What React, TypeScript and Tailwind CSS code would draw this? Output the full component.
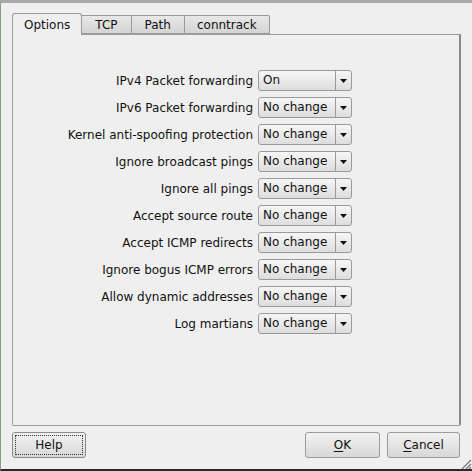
import React from 'react';

const rows = [
  ['IPv4 Packet forwarding', 'On'],
  ['IPv6 Packet forwarding', 'No change'],
  ['Kernel anti-spoofing protection', 'No change'],
  ['Ignore broadcast pings', 'No change'],
  ['Ignore all pings', 'No change'],
  ['Accept source route', 'No change'],
  ['Accept ICMP redirects', 'No change'],
  ['Ignore bogus ICMP errors', 'No change'],
  ['Allow dynamic addresses', 'No change'],
  ['Log martians', 'No change'],
];

const Combo = ({ value }: { value: string }) => (
  <div className="flex h-[21px] w-[94px] rounded-[3px] border border-[#9a9a9a] bg-gradient-to-b from-[#f6f6f6] to-[#dddddd]">
    <div className="flex-1 pl-[4px] leading-[19px]">{value}</div>
    <div className="flex w-[16px] items-center justify-center border-l border-[#9a9a9a]">
      <svg width="7" height="4" viewBox="0 0 7 4">
        <path d="M0 0h7L3.5 4z" fill="#111" />
      </svg>
    </div>
  </div>
);

const Tab = ({ label, active, narrow }: { label: string; active?: boolean; narrow?: boolean }) =>
  active ? (
    <div className="relative -mb-px z-10 flex h-[22px] items-center rounded-t-[3px] border border-b-0 border-[#9a9a9a] bg-[#efefef] px-[11px]">
      {label}
    </div>
  ) : (
    <div
      className={
        narrow
          ? 'flex h-[19px] items-center border border-l-0 border-[#9a9a9a] bg-gradient-to-b from-[#e8e8e8] to-[#d4d4d4] px-[12px] rounded-tr-[2px]'
          : 'flex h-[19px] items-center border border-l-0 border-[#9a9a9a] bg-gradient-to-b from-[#e8e8e8] to-[#d4d4d4] px-[13px]'
      }
    >
      {label}
    </div>
  );

const App = () => {
  return (
    <div
      className="flex h-[471px] w-[472px] flex-col border-t-[3px] border-b-[2px] border-l border-t-[#a9a9a9] border-b-[#2a2a2a] border-l-[#8a9e8a] bg-[#efefef] text-[12px] text-[#111]"
      style={{ fontFamily: '"DejaVu Sans", sans-serif' }}
    >
      <div className="flex flex-1 flex-col px-[11px] pt-[10px]">
        <div className="flex items-end">
          <Tab label="Options" active />
          <div className="flex">
            <Tab label="TCP" />
            <Tab label="Path" />
            <Tab label="conntrack" narrow />
          </div>
        </div>
        <div className="flex h-[392px] flex-col gap-[6px] rounded-b-[2px] border border-[#9a9a9a] border-r-2 border-r-[#8a8a8a] pt-[35px]">
          {rows.map(([label, value]) => (
            <div key={label} className="flex items-center">
              <div className="w-[245px] pr-[5px] text-right">{label}</div>
              <Combo value={value} />
            </div>
          ))}
        </div>
        <div className="mt-[6px] flex items-center pr-[1px]">
          <button className="flex h-[26px] w-[74px] items-center justify-center rounded-[3px] border border-[#8a8a8a] bg-gradient-to-b from-[#f2f2f2] to-[#d8d8d8] p-[2px]">
            <span className="flex h-full w-full items-center justify-center border border-dotted border-[#333]">
              Help
            </span>
          </button>
          <div className="flex-1" />
          <button className="h-[26px] w-[75px] rounded-[3px] border border-[#9a9a9a] bg-gradient-to-b from-[#f2f2f2] to-[#d8d8d8]">
            <span className="underline underline-offset-2">O</span>K
          </button>
          <button className="ml-[7px] h-[26px] w-[73px] rounded-[3px] border border-[#9a9a9a] bg-gradient-to-b from-[#f2f2f2] to-[#d8d8d8]">
            <span className="underline underline-offset-2">C</span>ancel
          </button>
        </div>
      </div>
      <div className="flex h-[10px] justify-end">
        <svg width="14" height="10" viewBox="0 0 14 10">
          <path d="M4 10L13 1M8 10L13 5M11 10L13 8" stroke="#777" strokeWidth="1.2" />
        </svg>
      </div>
    </div>
  );
};

export default App;
